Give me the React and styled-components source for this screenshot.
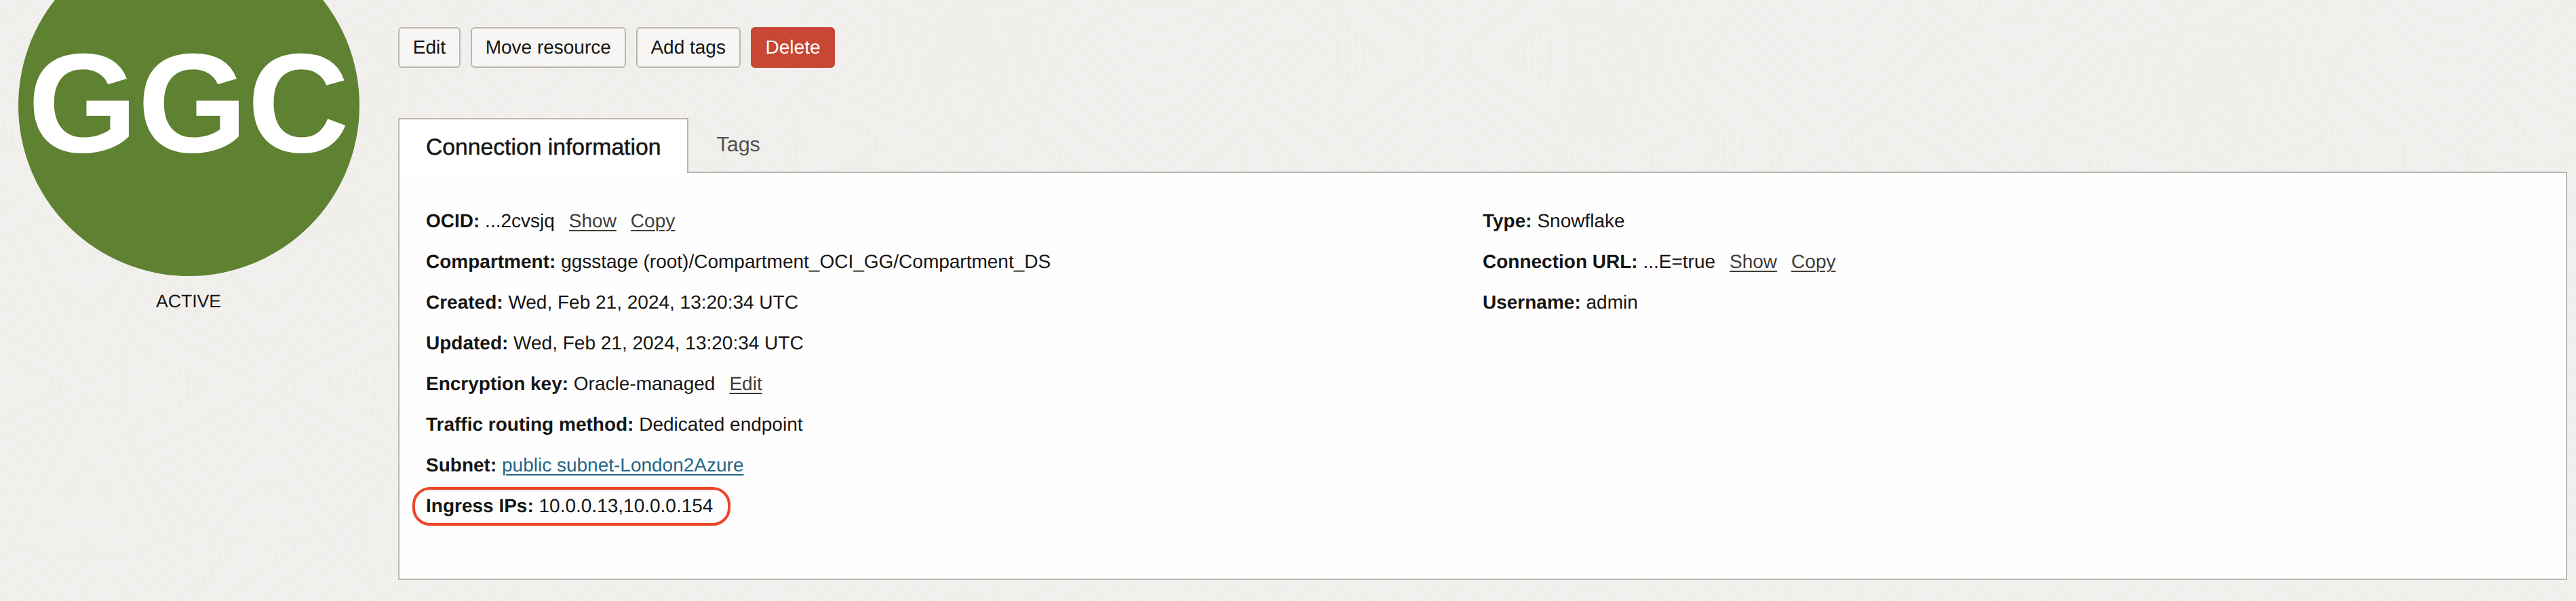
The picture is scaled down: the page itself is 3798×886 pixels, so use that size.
import React from "react";
import styled, { createGlobalStyle } from "styled-components";

const GlobalStyle = createGlobalStyle`
  html, body {
    margin: 0;
    padding: 0;
    height: 100%;
    overflow: hidden;
  }
  body {
    font-family: "Liberation Sans", Arial, sans-serif;
    text-rendering: geometricPrecision;
    color: #161513;
    background: #f1f0ee;
  }
`;

const Page = styled.div`
  position: relative;
  display: flex;
  width: 3798px;
  height: 886px;
  overflow: hidden;
`;

const Texture = styled.svg`
  position: absolute;
  left: 0;
  top: 0;
`;

const Sidebar = styled.aside`
  position: relative;
  flex: 0 0 587px;
  display: flex;
  flex-direction: column;
  align-items: center;
  padding-right: 31px;
  box-sizing: border-box;
`;

const Badge = styled.div`
  flex: none;
  width: 503px;
  height: 503px;
  margin-top: -96px;
  border-radius: 50%;
  background: #5f8132;
  color: #fff;
  font-size: 208px;
  font-weight: 700;
  line-height: 498px;
  text-align: center;
`;

const Status = styled.div`
  margin-top: 21px;
  font-size: 26.6px;
  line-height: 32px;
`;

const Main = styled.main`
  position: relative;
  flex: none;
  width: 3198px;
  padding-top: 40px;
`;

const Toolbar = styled.div`
  display: flex;
  gap: 15px;
`;

const Button = styled.button`
  height: 60px;
  padding: 0 19.8px;
  box-sizing: border-box;
  border: 2px solid ${(p) => (p.$danger ? "#c74634" : "#bcb6b1")};
  border-radius: 6px;
  background: ${(p) => (p.$danger ? "#c74634" : "#f7f6f4")};
  color: ${(p) => (p.$danger ? "#fff" : "#161513")};
  font: 28px "Liberation Sans", Arial, sans-serif;
  text-rendering: geometricPrecision;
`;

const TabBar = styled.div`
  display: flex;
  margin-top: 74px;
  margin-bottom: -2px;
  position: relative;
`;

const Tab = styled.div`
  height: 81px;
  box-sizing: border-box;
  padding: ${(p) => (p.$active ? "0 39px" : "0 41px")};
  border: ${(p) => (p.$active ? "2px solid #bcb6b1" : "none")};
  border-bottom: none;
  background: ${(p) => (p.$active ? "#fff" : "transparent")};
  color: ${(p) => (p.$active ? "#161513" : "#55524e")};
  font-size: ${(p) => (p.$active ? "33.7px" : "30.5px")};
  line-height: ${(p) => (p.$active ? "83px" : "79px")};
  -webkit-text-stroke: ${(p) => (p.$active ? "0.5px" : "0")};
`;

const Panel = styled.section`
  height: 602px;
  box-sizing: border-box;
  padding: 41px 39px 0;
  border: 2px solid #bcb6b1;
  background: #fefefe;
  display: grid;
  grid-template-columns: 1fr 1fr;
`;

const Column = styled.div`
  display: flex;
  flex-direction: column;
`;

const Row = styled.div`
  position: relative;
  height: 60px;
  line-height: 60px;
  font-size: 28px;
  white-space: pre;
`;

const Label = styled.b`
  font-weight: 700;
`;

const Action = styled.a`
  margin-left: 21px;
  color: #3f3c38;
  text-decoration: underline;
  text-underline-offset: 4px;
  text-decoration-thickness: 1.5px;
`;

const SubnetLink = styled.a`
  color: #24668a;
  text-decoration: underline;
  text-underline-offset: 4px;
  text-decoration-thickness: 1.5px;
`;

// red callout drawn on the screenshot, sits over the row
const Callout = styled.span`
  position: absolute;
  left: -20px;
  top: 2px;
  width: 469px;
  height: 57px;
  box-sizing: border-box;
  border: 4px solid #ee4427;
  border-radius: 26px;
`;

const leftRows = [
  { label: "OCID:", value: "...2cvsjq", actions: ["Show", "Copy"] },
  { label: "Compartment:", value: "ggsstage (root)/Compartment_OCI_GG/Compartment_DS" },
  { label: "Created:", value: "Wed, Feb 21, 2024, 13:20:34 UTC" },
  { label: "Updated:", value: "Wed, Feb 21, 2024, 13:20:34 UTC" },
  { label: "Encryption key:", value: "Oracle-managed", actions: ["Edit"] },
  { label: "Traffic routing method:", value: "Dedicated endpoint" },
  { label: "Subnet:", link: "public subnet-London2Azure" },
  { label: "Ingress IPs:", value: "10.0.0.13,10.0.0.154", marked: true },
];

const rightRows = [
  { label: "Type:", value: "Snowflake" },
  { label: "Connection URL:", value: "...E=true", actions: ["Show", "Copy"] },
  { label: "Username:", value: "admin" },
];

// swirl patches of the wallpaper, later ones cover earlier ones like scales
const swirls = [];
for (let r = 0; r < 4; r++) {
  for (let c = 0; c < 13; c++) {
    swirls.push({
      x: c * 310 + (r % 2) * 155 + ((c * 37) % 60),
      y: r * 270 - 60 + ((c * 53) % 70),
      rx: 190 + ((c + r) % 3) * 30,
      ry: 210 + ((c * 2 + r) % 3) * 25,
    });
  }
}
swirls.push({ x: 128, y: 570, rx: 250, ry: 250 });
swirls.push({ x: 395, y: 570, rx: 210, ry: 230 });
swirls.push({ x: 2142, y: 80, rx: 170, ry: 240 });

const Swirl = ({ x, y, rx, ry }) => {
  const count = Math.floor(rx / 13);
  const rings = [];
  for (let i = 1; i <= count; i++) {
    rings.push(
      <ellipse key={i} cx={x} cy={y} rx={(rx * i) / count} ry={(ry * i) / count} />
    );
  }
  return (
    <g>
      <ellipse cx={x} cy={y} rx={rx + 3} ry={ry + 3} fill="#f1f0ee" stroke="none" />
      {rings}
    </g>
  );
};

const InfoRow = ({ row }) => (
  <Row>
    <Label>{row.label}</Label>
    {" "}
    {row.value && <span>{row.value}</span>}
    {row.link && <SubnetLink>{row.link}</SubnetLink>}
    {row.actions && row.actions.map((a) => <Action key={a}>{a}</Action>)}
    {row.marked && <Callout />}
  </Row>
);

export default function App() {
  return (
    <Page>
      <GlobalStyle />
      <Texture width="3798" height="886" fill="none" stroke="#efeeeb" strokeWidth="5">
        {swirls.map((s, i) => <Swirl key={i} {...s} />)}
      </Texture>
      <Sidebar>
        <Badge>GGC</Badge>
        <Status>ACTIVE</Status>
      </Sidebar>
      <Main>
        <Toolbar>
          <Button>Edit</Button>
          <Button>Move resource</Button>
          <Button>Add tags</Button>
          <Button $danger>Delete</Button>
        </Toolbar>
        <TabBar>
          <Tab $active>Connection information</Tab>
          <Tab>Tags</Tab>
        </TabBar>
        <Panel>
          <Column>
            {leftRows.map((r) => <InfoRow key={r.label} row={r} />)}
          </Column>
          <Column>
            {rightRows.map((r) => <InfoRow key={r.label} row={r} />)}
          </Column>
        </Panel>
      </Main>
    </Page>
  );
}
